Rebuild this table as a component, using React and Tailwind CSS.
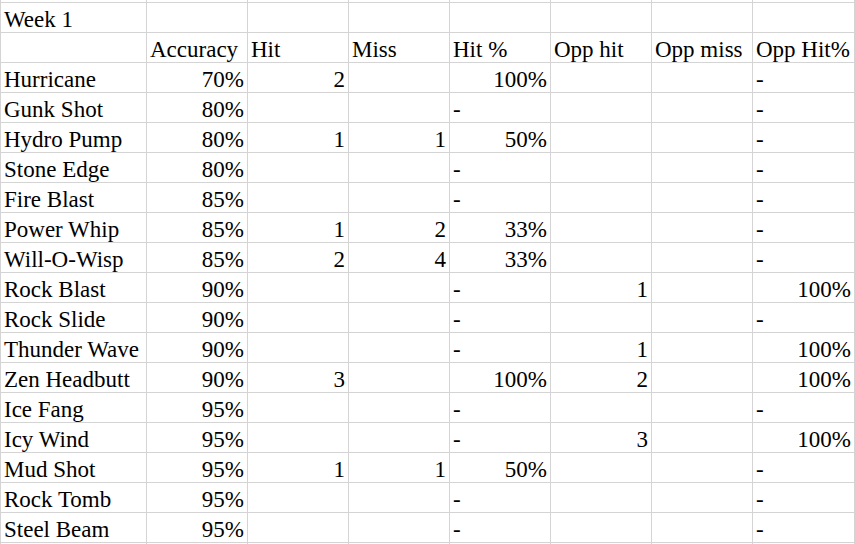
import React from "react";

// column widths in px (each cell draws its own left gridline)
const colWidths = ["w-[146px]", "w-[101px]", "w-[101px]", "w-[101px]", "w-[101px]", "w-[101px]", "w-[101px]", "w-[103px] border-r"];

const headers = ["", "Accuracy", "Hit", "Miss", "Hit %", "Opp hit", "Opp miss", "Opp Hit%"];

// name, accuracy, hit, miss, hit%, opp hit, opp miss, opp hit%
const moves = [
  ["Hurricane", "70%", "2", "", "100%", "", "", "-"],
  ["Gunk Shot", "80%", "", "", "-", "", "", "-"],
  ["Hydro Pump", "80%", "1", "1", "50%", "", "", "-"],
  ["Stone Edge", "80%", "", "", "-", "", "", "-"],
  ["Fire Blast", "85%", "", "", "-", "", "", "-"],
  ["Power Whip", "85%", "1", "2", "33%", "", "", "-"],
  ["Will-O-Wisp", "85%", "2", "4", "33%", "", "", "-"],
  ["Rock Blast", "90%", "", "", "-", "1", "", "100%"],
  ["Rock Slide", "90%", "", "", "-", "", "", "-"],
  ["Thunder Wave", "90%", "", "", "-", "1", "", "100%"],
  ["Zen Headbutt", "90%", "3", "", "100%", "2", "", "100%"],
  ["Ice Fang", "95%", "", "", "-", "", "", "-"],
  ["Icy Wind", "95%", "", "", "-", "3", "", "100%"],
  ["Mud Shot", "95%", "1", "1", "50%", "", "", "-"],
  ["Rock Tomb", "95%", "", "", "-", "", "", "-"],
  ["Steel Beam", "95%", "", "", "-", "", "", "-"],
];

// text stays left, numbers go right like a spreadsheet
const isNumber = (v) => v !== "-" && /^[0-9]/.test(v);

function Row({ cells, sliver }) {
  return (
    <div className={sliver ? "flex h-[2px] border-t border-[#d4d4d4] first:border-t-0" : "flex h-[30px] border-t border-[#d4d4d4]"}>
      {colWidths.map((w, i) => {
        const value = cells ? cells[i] : "";
        return (
          <div
            key={i}
            className={
              "shrink-0 border-l border-[#d4d4d4] flex items-end px-[3px] whitespace-nowrap overflow-visible leading-[24px] " +
              w +
              (isNumber(value) ? " justify-end" : " justify-start")
            }
          >
            {value}
          </div>
        );
      })}
    </div>
  );
}

export default function App() {
  return (
    <div
      className="w-[855px] h-[544px] bg-white text-black text-[23px] overflow-hidden"
      style={{ fontFamily: '"Liberation Serif", "Times New Roman", serif' }}
    >
      <Row sliver />
      <Row cells={["Week 1", "", "", "", "", "", "", ""]} />
      <Row cells={headers} />
      {moves.map((m) => (
        <Row key={m[0]} cells={m} />
      ))}
      <Row sliver />
    </div>
  );
}
